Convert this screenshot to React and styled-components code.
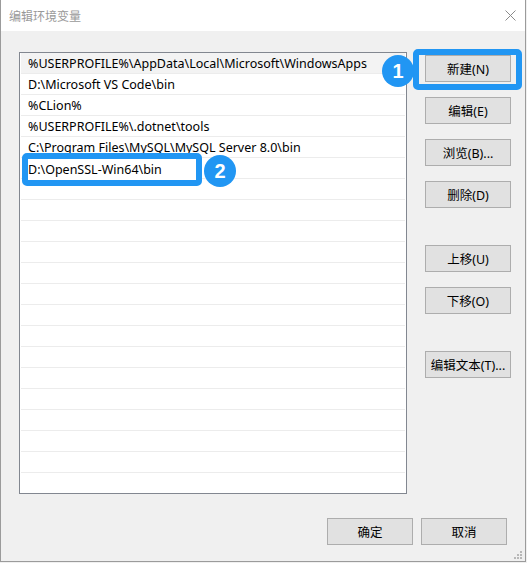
import React from "react";
import styled, { createGlobalStyle } from "styled-components";

const GlobalStyle = createGlobalStyle`
  html, body {
    margin: 0;
    padding: 0;
    background: #f0f0f0;
  }
  body {
    font-family: "Noto Sans", "Noto Sans CJK SC", sans-serif;
    font-size: 12px;
    color: #000;
  }
`;

const BLUE = "#2196f3";

const Window = styled.div`
  box-sizing: border-box;
  width: 526px;
  height: 562px;
  display: flex;
  flex-direction: column;
  background: #f0f0f0;
  border: 1px solid #9b9b9b;
  border-top: none;
  position: relative;
`;

const TitleBar = styled.div`
  height: 31px;
  flex: none;
  background: #fff;
  display: flex;
  align-items: center;
  justify-content: space-between;
  padding: 0 9px 0 8px;
`;

const Title = styled.div`
  color: #999;
  font-size: 12px;
  font-family: "Noto Sans CJK SC", sans-serif;
`;

const CloseIcon = () => (
  <svg width="11" height="11" viewBox="0 0 11 11">
    <path d="M0.5 0.5 L10.5 10.5 M10.5 0.5 L0.5 10.5" stroke="#8a8a8a" strokeWidth="1" fill="none" />
  </svg>
);

const Content = styled.div`
  flex: 1;
  display: flex;
  flex-direction: column;
  padding: 21px 14px 0 18px;
`;

const Main = styled.div`
  display: flex;
  gap: 18px;
`;

const ListBox = styled.div`
  width: 389px;
  height: 442px;
  box-sizing: border-box;
  border: 1px solid #828790;
  background: #fff;
  display: flex;
  flex-direction: column;
`;

const Row = styled.div`
  position: relative;
  height: 20px;
  flex: none;
  display: flex;
  align-items: center;
  padding-left: 7px;
  border-bottom: 1px solid #ececec;
  margin: 0 1px;
  background: ${(p) => (p.$selected ? "#f3f3f3" : "#fff")};
  white-space: nowrap;
  font-size: 12.5px;
  font-family: "Noto Sans", "Noto Sans CJK SC", sans-serif;
`;

const Side = styled.div`
  display: flex;
  flex-direction: column;
  padding-top: 3px;
`;

const Button = styled.div`
  position: relative;
  box-sizing: border-box;
  width: 86px;
  height: 27px;
  flex: none;
  display: flex;
  align-items: center;
  justify-content: center;
  background: #e1e1e1;
  border: 1px solid #adadad;
  font-size: 12.5px;
  font-family: "Noto Sans", "Noto Sans CJK SC", sans-serif;
  margin-top: ${(p) => p.$gap || 0}px;
`;

const Highlight = styled.div`
  position: absolute;
  z-index: 2;
  box-sizing: border-box;
  border: 6px solid ${BLUE};
  border-radius: 5px;
  left: ${(p) => p.$x}px;
  top: ${(p) => p.$y}px;
  width: ${(p) => p.$w}px;
  height: ${(p) => p.$h}px;
  pointer-events: none;
`;

const Badge = styled.div`
  position: absolute;
  z-index: 3;
  width: 32px;
  height: 32px;
  border-radius: 50%;
  background: ${BLUE};
  color: #fff;
  font-family: "Liberation Sans", Arial, sans-serif;
  font-weight: bold;
  font-size: 20px;
  display: flex;
  align-items: center;
  justify-content: center;
  left: ${(p) => p.$x}px;
  top: ${(p) => p.$y}px;
`;

const EditField = styled.div`
  position: absolute;
  z-index: 1;
  left: 1px;
  top: -5px;
  width: 180px;
  height: 33px;
  box-sizing: border-box;
  background: #fff;
  display: flex;
  align-items: center;
  padding-left: 6px;
`;

const Footer = styled.div`
  display: flex;
  justify-content: flex-end;
  gap: 8px;
  margin-top: 24px;
  padding-right: 4px;
`;

const Grip = styled.div`
  position: absolute;
  right: 3px;
  bottom: 2px;
  display: grid;
  grid-template-columns: repeat(3, 2px);
  grid-template-rows: repeat(3, 2px);
  gap: 1px;
`;

const Dot = styled.span`
  background: ${(p) => (p.$on ? "#b8b8b8" : "transparent")};
`;

const paths = [
  "%USERPROFILE%\\AppData\\Local\\Microsoft\\WindowsApps",
  "D:\\Microsoft VS Code\\bin",
  "%CLion%",
  "%USERPROFILE%\\.dotnet\\tools",
  "C:\\Program Files\\MySQL\\MySQL Server 8.0\\bin",
];

export default function App() {
  const empty = Array.from({ length: 14 });
  return (
    <>
      <GlobalStyle />
      <Window>
        <TitleBar>
          <Title>编辑环境变量</Title>
          <CloseIcon />
        </TitleBar>
        <Content>
          <Main>
            <ListBox>
              {paths.map((p, i) => (
                <Row key={i} $selected={i === 0}>
                  {p}
                </Row>
              ))}
              <Row>
                <EditField>D:\OpenSSL-Win64\bin</EditField>
                <Highlight $x={1} $y={-5} $w={180} $h={33} />
                <Badge $x={183} $y={-3}>2</Badge>
              </Row>
              {empty.map((_, i) => (
                <Row key={"e" + i} />
              ))}
            </ListBox>
            <Side>
              <Button>
                新建(N)
                <Highlight $x={-13} $y={-7} $w={109} $h={41} />
                <Badge $x={-44} $y={-1}>1</Badge>
              </Button>
              <Button $gap={15}>编辑(E)</Button>
              <Button $gap={15}>浏览(B)...</Button>
              <Button $gap={15}>删除(D)</Button>
              <Button $gap={37}>上移(U)</Button>
              <Button $gap={15}>下移(O)</Button>
              <Button $gap={37}>编辑文本(T)...</Button>
            </Side>
          </Main>
          <Footer>
            <Button>确定</Button>
            <Button>取消</Button>
          </Footer>
        </Content>
        <Grip>
          {[0, 0, 1, 0, 1, 1, 1, 1, 1].map((on, i) => (
            <Dot key={i} $on={on} />
          ))}
        </Grip>
      </Window>
    </>
  );
}
